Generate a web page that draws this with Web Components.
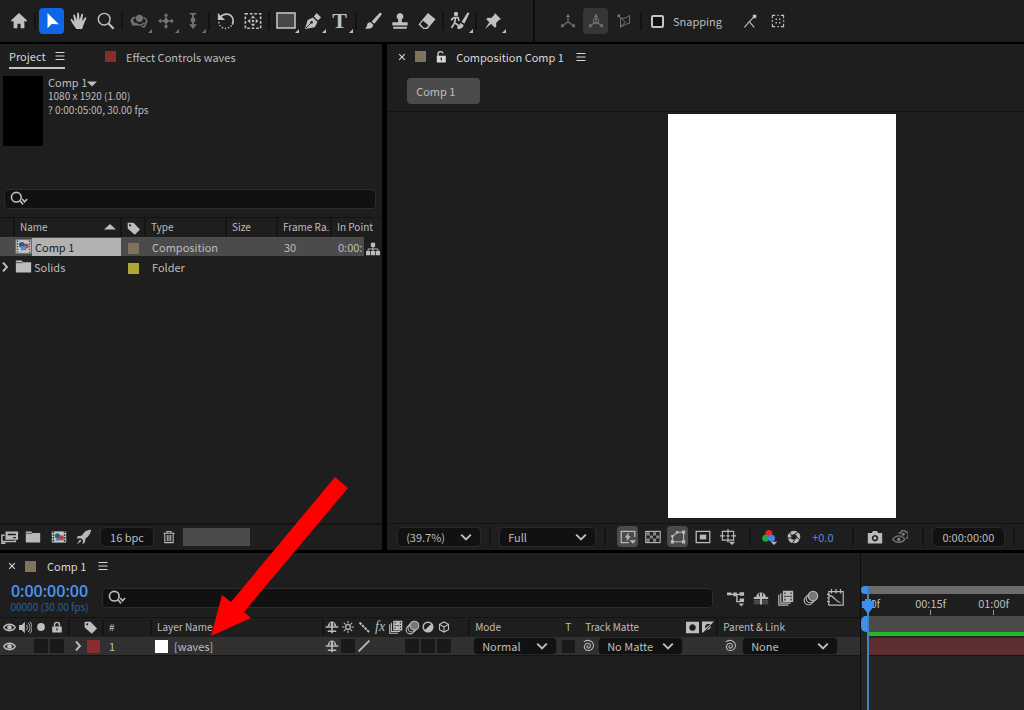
<!DOCTYPE html>
<html lang="en">
<head>
<meta charset="utf-8">
<meta name="viewport" content="width=device-width, initial-scale=1">
<title>Comp 1</title>
<style>
  html, body {
    margin: 0;
    height: 100%;
    background: #000;
  }
  body {
    font: 11px/14px "Noto Sans CJK SC", "Open Sans", sans-serif;
    color: #bdbdbd;
    overflow: hidden;
  }
</style>
</head>
<body>
<ae-app></ae-app>

<script>
const ICONS = {
  home: '<path d="M10 1 1 9.5l1.2 1.3L4 9.6V18h4.2v-5h3.6v5H16V9.6l1.8 1.2L19 9.5z" fill="currentColor"/>',
  select: '<path d="M5 1v17l4.6-4.6 8 .2z" fill="currentColor"/>',
  hand: '<path d="M7 19 2.2 12 .8 8.800c-.3-1.2 1-1.6 1.8-.6L5 11 3.6 4.200c-.2-1.5 1.6-1.8 2-.4L7.500 9 7.900 1.600c.1-1.5 2-1.5 2.100 0L10.600 9l2-6.300c.4-1.400 2.200-1 1.900.5L13.400 10l3-3.600c1-1.100 2.200-.2 1.600 1L15.500 13 13.500 19z" fill="currentColor"/>',
  zoom: '<circle cx="8" cy="8" r="6.5" fill="none" stroke="currentColor" stroke-width="1.6"/><path d="m13 13 5.5 5.5" stroke="currentColor" stroke-width="2.4"/>',
  orbit: '<g fill="none" stroke="currentColor" stroke-width="1.8"><path d="M6 6C1 7 0 11 4 13M9 14l-6-2M3 9v5h5M15 6c4 2 5 6 1 7M13 16c2 1 5 0 4-4M7 13c4 2 7 2 8-1"/></g><circle cx="10.5" cy="7" r="4" fill="currentColor"/>',
  pan: '<path d="M10 2v16M2 10h16" stroke="currentColor" stroke-width="1.8"/><path d="m10 0 3 4H7zM10 20l3-4H7zM0 10l4-3v6zM20 10l-4-3v6z" fill="currentColor"/><circle cx="10" cy="10" r="3" fill="currentColor"/>',
  dolly: '<path d="M10 1v15" stroke="currentColor" stroke-width="2.4"/><circle cx="10" cy="9" r="3" fill="currentColor"/><path d="m10 20 5-6H5zM6 0h8v2H6z" fill="currentColor"/>',
  rotate: '<path d="M3.5 6C7 1 15 1 17.5 7c1 3 .5 5-.5 7" fill="none" stroke="currentColor" stroke-width="1.8"/><path d="M2 11c1 8 10 10 15 3" fill="none" stroke="currentColor" stroke-width="1.6" stroke-dasharray="1.5 2"/><path d="M1 1v8h8z" fill="currentColor"/>',
  anchor: '<rect x="1.5" y="2" width="17" height="16" fill="none" stroke="currentColor" stroke-width="1.8" stroke-dasharray="3 2"/><path d="m10 4 2.5 3h-5zM10 16l2.5-3h-5zM4 10l3-2.5v5zM16 10l-3-2.5v5z" fill="currentColor"/><circle cx="10" cy="10" r="1.3" fill="currentColor"/>',
  rect: '<rect x="1" y="2" width="18" height="15" fill="#484848" stroke="currentColor" stroke-width="1.6"/>',
  pen: '<path d="M1 19 4 9l6-3 5 5-3 6zM11 5l3-4 5 5-3.5 3.5z" fill="currentColor"/><path d="m2 18 6-6" stroke="#1e1e1e"/><circle cx="8.5" cy="11.5" r="1.4" fill="#1e1e1e"/>',
  brush: '<path d="M19 1c1 .8.6 1.8 0 2.6L11.5 13 8.5 10.5 16.5 2c.8-.9 1.7-1.6 2.500-1zM7.600 11.600l2.700 2.500C10 18 6 19.500 1 18c2-.5 2-2 2.500-4s2.600-3 4.100-2.400z" fill="currentColor"/>',
  stamp: '<path d="M10 1a3.8 3.8 0 0 1 2 7v3.5h6.5V15h-17v-3.5H8V8a3.8 3.8 0 0 1 2-7zM2.5 16.5h15v2h-15z" fill="currentColor"/>',
  eraser: '<path d="m11 1 8.5 7L10.5 19H6L.5 14z" fill="currentColor"/><path d="m2.6 13.2 3-3.6 6 5-2.5 2.8H6.5z" fill="#1e1e1e"/>',
  roto: '<circle cx="6" cy="3" r="2.2" fill="currentColor"/><path d="M1 9l3-2.5h4L9 10M5.5 7l-1 5-3 5M5 12l3 2 .5 4" fill="none" stroke="currentColor" stroke-width="1.7"/><path d="m19.5 2-5 10.5-3-1.5 6-9.5zM10.5 12l3 2c0 3-3 4-6 4 2-2 1-4 3-6z" fill="currentColor"/>',
  pin: '<path d="m12 1 7 7-2 .6-3.5 3.5.2 4-1.500 1.500-4.300-4.300L1 19l5-7.500L2.500 8 4 6.500l4 .2L11.500 3z" fill="currentColor"/>',
  axis: '<path d="M10 3v8L3 16M10 11l7 5" fill="none" stroke="currentColor" stroke-width="1.4"/><path d="M7.5 5 10 1l2.5 4zM1 18l1-5 3.5 4zM19 18l-1-5-3.5 4z" fill="currentColor"/>',
  axisWorld: '<path d="M10 3v8L3 16M10 11l7 5" fill="none" stroke="currentColor" stroke-width="1.4"/><circle cx="10" cy="10" r="3.5" fill="none" stroke="currentColor" stroke-width="1.2"/><path d="M7.5 5 10 1l2.5 4zM1 18l1-5 3.5 4zM19 18l-1-5-3.5 4z" fill="currentColor"/>',
  axisView: '<path d="M5 6h7l6-4v11l-6 2-7 4zM2 2l10 10M5 18l7-6" fill="none" stroke="currentColor" stroke-width="1.4"/><circle cx="2.5" cy="2.5" r="2.2" fill="currentColor"/>',
  snapEdge: '<path d="m2 19 7-8 7 8M9 11l8-8" fill="none" stroke="currentColor" stroke-width="1.6"/><rect x="14" y="1" width="5" height="5" fill="currentColor"/>',
  snapBox: '<path d="M2 6V2h4M14 2h4v4M18 14v4h-4M6 18H2v-4" fill="none" stroke="currentColor" stroke-width="1.6"/><path d="M6.500 6.500h2v2h-2zM11.500 6.500h2v2h-2zM6.500 11.500h2v2h-2zM11.500 11.500h2v2h-2zM9 1h2v2H9zM9 17h2v2H9zM1 9h2v2H1zM17 9h2v2h-2z" fill="currentColor"/>',
  menu: '<path d="M1 3h18M1 10h18M1 17h18" stroke="currentColor" stroke-width="2"/>',
  close: '<path d="m3 3 14 14M17 3 3 17" stroke="currentColor" stroke-width="2.8"/>',
  unlock: '<path d="M5 9V5c0-5 8-5 8-1" fill="none" stroke="currentColor" stroke-width="2"/><path d="M3 8h15v11H3zm6.5 3v5h2v-5z" fill="currentColor" fill-rule="evenodd"/>',
  lock: '<path d="M6 9V6c0-5 8-5 8 0v3" fill="none" stroke="currentColor" stroke-width="2.4"/><path d="M2 9h16v10H2zm7 3v4h2v-4z" fill="currentColor" fill-rule="evenodd"/>',
  search: '<circle cx="7" cy="8" r="5.4" fill="none" stroke="currentColor" stroke-width="1.8"/><path d="m11 12 3.5 4M13.5 10l2.7 3 2.8-3" fill="none" stroke="currentColor" stroke-width="1.8"/>',
  tag: '<path d="M1 1h9L20 11.5 12 19.5 1 10zM4.8 3.5a1.600 1.600 0 1 0 .1 0z" fill="currentColor" fill-rule="evenodd"/>',
  sort: '<path d="M0 14 10 5l10 9z" fill="currentColor"/>',
  caret: '<path d="M0 5h20L10 15z" fill="currentColor"/>',
  chevronDown: '<path d="m2 6 8 8 8-8" fill="none" stroke="currentColor" stroke-width="3.4"/>',
  chevronRight: '<path d="m6 1 8 9-8 9" fill="none" stroke="currentColor" stroke-width="3.8"/>',
  compItem: '<rect x="1" y="2" width="18" height="16" fill="#c6c6c6" stroke="#777"/><path d="M3 3v14M17 3v14" stroke="#444" stroke-width="1.6" stroke-dasharray="1.6 1.6"/><circle cx="8" cy="8" r="3.4" fill="#23608c"/><circle cx="13" cy="9.5" r="3" fill="#b3404a"/><rect x="7" y="9.5" width="6" height="5" fill="#4697be"/>',
  film: '<rect x="1" y="3" width="18" height="14" fill="#c6c6c6"/><path d="M3 3v14M17 3v14" stroke="#222" stroke-width="2" stroke-dasharray="2 1.5"/><circle cx="8" cy="8.5" r="3.2" fill="#245f86"/><circle cx="13" cy="11" r="3.2" fill="#bd3f3f"/><circle cx="8.5" cy="13" r="2" fill="#3d82ac"/>',
  folder: '<path d="M1 3h7l1.5 2H19v12H1z" fill="currentColor"/><path d="M1 5.5h8" stroke="#1e1e1e" stroke-width=".8"/>',
  footage: '<path d="M5 4h14v9H5zM7.5 6.5v1.5h9V6.500zM13.500 10v1.300h3V10z" fill="currentColor" fill-rule="evenodd"/><path d="M4 8H1v7h15v-1.5M0 17h5" fill="none" stroke="currentColor" stroke-width="1.6"/>',
  rocket: '<path d="M19 1c-6 0-9 3-11.5 7L2 9l-1 3 5-.5L9 14l-1 5 3-2 1-5c4-3 6-6 7-11zM5 13l-4 6 6-4z" fill="currentColor"/>',
  trash: '<path d="M2 4.5h16M7 4V2h6v2M4 5v13h12V5M7.5 7v9M10 7v9M12.5 7v9" fill="none" stroke="currentColor" stroke-width="1.5"/>',
  flow: '<path d="M7 1h6v6H7zM0 13h6v6H0zM7 13h6v6H7zM14 13h6v6h-6z" fill="currentColor"/><path d="M10 6v8M3 14v-4h14v4" fill="none" stroke="currentColor" stroke-width="1.4"/>',
  preview: '<path d="M11 17H1.5V3h17v7" fill="none" stroke="currentColor" stroke-width="1.6"/><path d="m11 4-5 7h3l-1 5 5.5-7h-3zM12 14h8l-4 4.5z" fill="currentColor"/>',
  checker: '<rect x="1" y="3" width="18" height="14" fill="none" stroke="currentColor" stroke-width="1.4"/><path d="M2 4h4v4H2zM10 4h4v4h-4zM6 8h4v4H6zM14 8h4v4h-4zM2 12h4v4H2zM10 12h4v4h-4z" fill="#888"/>',
  mask: '<path d="M3 16V9l6-5h8v12z" fill="none" stroke="currentColor" stroke-width="1.4"/><path d="M1 14h4v4H1zM15 14h4v4h-4zM15 2h4v4h-4zM7.5 2.5h3v3h-3zM1.5 7.5h3v3h-3z" fill="currentColor"/>',
  region: '<rect x="1.5" y="3" width="17" height="14" fill="none" stroke="currentColor" stroke-width="1.6"/><path d="M6 7h8v6H6z" fill="currentColor"/>',
  guides: '<path d="M3 3h14v11H3zM10 0v6M10 11v6M0 8.5h6M14 8.5h6M8 8.5h4M10 6.5v4" fill="none" stroke="currentColor" stroke-width="1.5"/><path d="M11 16h8l-4 4z" fill="currentColor"/>',
  rgb: '<circle cx="8.5" cy="5.5" r="4.3" fill="#e0272c"/><circle cx="4.5" cy="11.5" r="4.3" fill="#23a83e"/><circle cx="12" cy="11.5" r="4.3" fill="#4484e8"/><path d="M11 16h8l-4 4z" fill="currentColor"/>',
  aperture: '<circle cx="10" cy="10" r="6.5" fill="none" stroke="currentColor" stroke-width="5"/><path d="M7 9 3 2M10 6.5 17 2M13.5 9.5l5 5M11 14l-4 6M7 12l-7-1" fill="none" stroke="#1e1e1e" stroke-width="1.4"/>',
  camera: '<path d="M1 5h5l1.5-2.5h5L14 5h5v13H1zm9 2.5a4 4 0 1 0 .1 0zm0 2a2 2 0 1 1-.1 0z" fill="currentColor" fill-rule="evenodd"/>',
  showSnap: '<path d="M1 13c4-6 11-6 15 0-4 5-11 5-15 0z" fill="none" stroke="currentColor" stroke-width="1.6"/><circle cx="8.5" cy="13" r="2.3" fill="currentColor"/><path d="M8 5h3l1-3h4l1 2h3v7h-3" fill="none" stroke="currentColor" stroke-width="1.6"/><circle cx="14" cy="6.5" r="2" fill="currentColor"/>',
  flowchart: '<path d="M1 6h7M10 6h5M11 6v8h4" fill="none" stroke="currentColor" stroke-width="1.6"/><path d="M0 4h5v3H0zM7 4h4v4H7zM14 3.5h5v4h-5zM14 10.5h5v4h-5zM13 16h6l-3 3.5z" fill="currentColor"/>',
  shy: '<path d="M4 9c0-9 12-9 12 0z" fill="currentColor"/><path d="M10 7v12M1 10h18M4 16h12" stroke="currentColor" stroke-width="2.2"/><path d="M7.5 4v5M12.5 4v5" stroke="#1e1e1e" stroke-width="1.5"/>',
  shyBig: '<path d="M1 12h18v6H1z" fill="#484848"/><path d="M4 9c0-8 12-8 12 0z" fill="currentColor"/><path d="M1 10h18M10 9v9" stroke="currentColor" stroke-width="2.4"/><path d="M8 4v4M12 4v4" stroke="#1e1e1e" stroke-width="1.2"/>',
  blend: '<path d="M1 6v13h12M3.5 4v12.5H16" fill="none" stroke="currentColor" stroke-width="1.5"/><path d="M6 1h13v14H6zM8 3v2h1.5V3zM8 7v2h1.5V7zM8 11v2h1.5v-2zM15.5 3v2H17V3zM15.5 7v2H17V7zM15.5 11v2H17v-2z" fill="currentColor" fill-rule="evenodd"/><path d="M10.5 8h4" stroke="#1e1e1e"/>',
  motion: '<circle cx="7" cy="13" r="5.5" fill="none" stroke="currentColor" stroke-width="1.4"/><circle cx="9.5" cy="10.5" r="5.5" fill="none" stroke="currentColor" stroke-width="1.4"/><circle cx="12.5" cy="7.5" r="5.9" fill="#777" stroke="currentColor" stroke-width="1.4"/>',
  graph: '<path d="M2 3h16v15H2zM2 7c7 0 7 8 13 8M5 0v5M10 0v5M15 0v5M0 6h3M0 10h3M0 14h3" fill="none" stroke="currentColor" stroke-width="1.3"/>',
  eye: '<path d="M1 10C5 3.5 15 3.5 19 10c-4 6.5-14 6.500-18 0z" fill="none" stroke="currentColor" stroke-width="2.2"/><circle cx="10" cy="10" r="3.6" fill="currentColor"/>',
  audio: '<path d="M0 6h4l5-5v18l-5-5H0z" fill="currentColor"/><path d="M11.5 6c2 2 2 6 0 8M14 3c4 4 4 10 0 14M17 1c4 5 4 13 0 18" fill="none" stroke="currentColor" stroke-width="1.5"/>',
  solo: '<circle cx="10" cy="10" r="6.5" fill="currentColor"/>',
  sun: '<circle cx="10" cy="10" r="4" fill="none" stroke="currentColor" stroke-width="2"/><path d="M10 0v4M10 16v4M0 10h4M16 10h4M3 3l3 3M14 14l3 3M17 3l-3 3M6 14l-3 3" stroke="currentColor" stroke-width="1.7"/>',
  quality: '<path d="m1 1 18 18" stroke="currentColor" stroke-width="3.6" stroke-dasharray="5 1.5"/>',
  adjust: '<circle cx="10" cy="10" r="8" fill="none" stroke="currentColor" stroke-width="2.4"/><path d="M16 4A8 8 0 1 1 4 16z" fill="currentColor"/>',
  cube: '<path d="m10 1.5 7.5 4v9l-7.5 4-7.5-4v-9zM2.5 6l7.5 4 7.5-4M10 10v8" fill="none" stroke="currentColor" stroke-width="1.8"/>',
  slash: '<path d="M1 19 19 1" stroke="currentColor" stroke-width="3"/>',
  matteA: '<path d="M0 1h20v18H0zm10 4a5 5 0 1 0 .1 0z" fill="currentColor" fill-rule="evenodd"/>',
  matteB: '<path d="M0 1h20L11 10 2 19H0zm10 4a5 5 0 0 0-4.5 7L14 5.5C12.5 5 11.5 5 10 5z" fill="currentColor" fill-rule="evenodd"/><path d="M15 8c0 4-3 7-7 7z" fill="currentColor"/>',
  whip: '<path d="M10.5 10c-1-1-3 1-1.5 2.4 2 1.6 5-.4 4.500-3.400C13 5.500 8 5 6 8c-3 4 0 9 5 8.500 5-.5 8-5 6.500-9.500C15.500 1.500 8 .5 4 4" fill="none" stroke="currentColor" stroke-width="1.5"/>'
};

const RESET = `
  * { box-sizing: border-box; }
  button, input, select { font: inherit; color: inherit; margin: 0; }
  button { border: 0; padding: 0; background: none; display: flex; align-items: center; justify-content: center; }
`;

class AeElement extends HTMLElement {
  constructor() {
    super();
    this.attachShadow({ mode: "open" });
  }

  connectedCallback() {
    this.shadowRoot.innerHTML = `<style>${RESET}</style>` + this.render();
  }

  get(name, fallback = "") {
    return this.getAttribute(name) ?? fallback;
  }
}

class AeIcon extends AeElement {
  render() {
    const size = this.get("size", "18");
    return `
      <style>
        :host { display: inline-flex; flex: none; vertical-align: middle; }
        svg { width: ${size}px; height: ${size}px; display: block; }
      </style>
      <svg viewBox="0 0 20 20" aria-hidden="true">${ICONS[this.get("name")]}</svg>
    `;
  }
}

class AeSeparator extends AeElement {
  render() {
    return `
      <style>
        :host { display: block; flex: none; width: 2px; height: 18px; margin: 0 2px; background: #131313; }
      </style>
    `;
  }
}

class ColorSwatch extends AeElement {
  render() {
    const size = this.get("size", "11");
    return `
      <style>
        :host { display: inline-block; flex: none; width: ${size}px; height: ${size}px; vertical-align: middle; background: ${this.get("color")}; }
      </style>
    `;
  }
}

class ToolButton extends AeElement {
  render() {
    const icon = this.get("icon");
    return `
      <style>
        :host { display: block; flex: none; }
        button { position: relative; width: 27px; height: 26px; border-radius: 4px; color: #c0c0c0; }
        :host([selected]) button { width: 25px; margin: 0 1px; background: #0d66e8; color: #fff; }
        :host([active]) button { width: 25px; margin: 0 1px; background: #363636; }
        :host([dim]) button { color: #737373; }
        .corner { position: absolute; right: 0; bottom: 1px; border: 2px solid transparent; border-right-color: currentColor; border-bottom-color: currentColor; }
        .letter { font: bold 22px/24px "Liberation Serif", serif; }
      </style>
      <button type="button" aria-label="${this.get("label")}">
        ${icon === "type" ? '<span class="letter">T</span>' : `<ae-icon name="${icon}" size="${this.get("size", "18")}"></ae-icon>`}
        ${this.hasAttribute("more") ? '<span class="corner"></span>' : ""}
      </button>
    `;
  }
}

class IconButton extends AeElement {
  render() {
    return `
      <style>
        :host { display: block; flex: none; }
        button { width: ${this.get("width", "25")}px; height: 21px; border-radius: 4px; color: #b9b9b9; }
        :host([active]) button { width: 21px; margin: 0 2px; background: #4b4b4b; }
        :host([dim]) button { color: #777; }
      </style>
      <button type="button" aria-label="${this.get("label")}"><ae-icon name="${this.get("icon")}" size="${this.get("size", "16")}"></ae-icon></button>
    `;
  }
}

class DropDown extends AeElement {
  render() {
    return `
      <style>
        :host { display: block; position: relative; flex: none; width: ${this.get("width")}px; height: ${this.get("height", "16")}px; }
        select { appearance: none; width: 100%; height: 100%; padding: 0 20px 0 8px; border: 0; border-radius: 3px; background: #111; line-height: 16px; outline: 1px solid #292929; }
        ae-icon { position: absolute; right: 8px; top: 0; bottom: 0; align-items: center; pointer-events: none; }
      </style>
      <select aria-label="${this.get("label")}"><option>${this.get("value")}</option></select>
      <ae-icon name="chevronDown" size="12"></ae-icon>
    `;
  }
}

class SearchBox extends AeElement {
  render() {
    return `
      <style>
        :host { display: flex; align-items: center; height: 20px; padding: 0 5px; background: #111; border: 1px solid #2c2c2c; border-radius: 4px; }
        input { flex: 1; min-width: 0; height: 16px; padding: 0 4px; border: 0; outline: 0; background: none; }
      </style>
      <ae-icon name="search" size="18"></ae-icon>
      <input type="text" aria-label="${this.get("label")}">
    `;
  }
}

class AppToolbar extends AeElement {
  render() {
    return `
      <style>
        :host { display: flex; height: 42px; background: #1e1e1e; }
        .group { display: flex; align-items: center; }
        .tools { flex: none; width: 535px; padding-left: 5px; border-right: 2px solid #0c0c0c; }
        .options { flex: 1; min-width: 0; padding-left: 19px; }
        .options tool-button { margin-right: 1px; }
        label { display: flex; align-items: center; gap: 9px; margin: 0 14px 0 7px; line-height: 16px; }
        input { appearance: none; width: 13px; height: 13px; border: 2px solid #c4c4c4; border-radius: 2px; background: #111; }
      </style>
      <div class="group tools">
        <tool-button icon="home" label="Home"></tool-button>
        <ae-separator></ae-separator>
        <tool-button icon="select" label="Selection" selected></tool-button>
        <tool-button icon="hand" label="Hand"></tool-button>
        <tool-button icon="zoom" label="Zoom"></tool-button>
        <ae-separator></ae-separator>
        <tool-button icon="orbit" label="Orbit" dim more></tool-button>
        <tool-button icon="pan" label="Pan" size="16" dim more></tool-button>
        <tool-button icon="dolly" label="Dolly" size="16" dim more></tool-button>
        <ae-separator></ae-separator>
        <tool-button icon="rotate" label="Rotate"></tool-button>
        <tool-button icon="anchor" label="Anchor point"></tool-button>
        <ae-separator></ae-separator>
        <tool-button icon="rect" label="Rectangle" size="20" more></tool-button>
        <tool-button icon="pen" label="Pen" more></tool-button>
        <tool-button icon="type" label="Type" more></tool-button>
        <ae-separator></ae-separator>
        <tool-button icon="brush" label="Brush"></tool-button>
        <tool-button icon="stamp" label="Clone stamp"></tool-button>
        <tool-button icon="eraser" label="Eraser"></tool-button>
        <ae-separator></ae-separator>
        <tool-button icon="roto" label="Roto brush" size="20" more></tool-button>
        <ae-separator></ae-separator>
        <tool-button icon="pin" label="Puppet pin" more></tool-button>
      </div>
      <div class="group options">
        <tool-button icon="axis" label="Local axis" size="16" dim></tool-button>
        <tool-button icon="axisWorld" label="World axis" size="16" dim active></tool-button>
        <tool-button icon="axisView" label="View axis" size="14" dim></tool-button>
        <ae-separator></ae-separator>
        <label><input type="checkbox">Snapping</label>
        <tool-button icon="snapEdge" label="Snap to edges" size="14"></tool-button>
        <tool-button icon="snapBox" label="Snap to features" size="14"></tool-button>
      </div>
    `;
  }
}

class ProjectPanel extends AeElement {
  render() {
    return `
      <style>
        :host { display: flex; flex-direction: column; min-width: 0; background: #1e1e1e; }
        .tabs { display: flex; align-items: center; height: 27px; padding: 0 0 2px 9px; }
        .tab { display: flex; align-items: center; justify-content: space-between; width: 56px; height: 25px; margin-right: 40px; border-bottom: 2px solid #c4c4c4; color: #d8d8d8; }
        .tabs color-swatch { margin-right: 10px; }
        .info { display: flex; gap: 5px; height: 88px; padding: 5px 3px; }
        .thumb { width: 40px; height: 70px; background: #000; }
        .info p { margin: 0; font-size: 10px; line-height: 14px; }
        .info .name { font-size: 11px; line-height: 12px; }
        .name ae-icon { height: 10px; }
        search-box { margin: 30px 6px 8px 4px; }
        .list { flex: 1; border-top: 1px solid #131313; }
        table { width: 100%; table-layout: fixed; border-collapse: collapse; line-height: 18px; }
        th { height: 18px; padding: 0 0 0 5px; overflow: hidden; white-space: nowrap; font-size: 10px; font-weight: normal; text-align: left; border-left: 2px solid #141414; }
        th:first-child { padding: 0; border-left: 0; }
        td { height: 20px; padding: 0; overflow: hidden; white-space: nowrap; }
        .head { display: flex; align-items: center; justify-content: space-between; margin-left: 13px; padding: 0 4px 0 5px; border-left: 2px solid #141414; }
        .mark { padding-left: 7px; }
        .num { padding-left: 7px; }
        .item { display: flex; align-items: center; height: 18px; }
        .file { padding-left: 15px; }
        .file span { flex: 1; padding-left: 3px; background: #b2b2b2; color: #222; }
        .dir { gap: 2px; }
        .dir ae-icon[name="folder"] { margin-left: 3px; }
        .picked td { background: #4b4b4b; border: solid #1e1e1e; border-width: 1px 0; }
        .picked td:last-child { padding-left: 2px; background: none; }
        footer { display: flex; align-items: center; height: 27px; border-top: 2px solid #131313; }
        .depth { width: 52px; height: 18px; margin: 0 6px 0 5px; border-radius: 4px; background: #111; outline: 1px solid #292929; }
        .bar { width: 67px; height: 18px; margin-left: 4px; background: #4b4b4b; }
      </style>
      <div class="tabs">
        <div class="tab">Project <ae-icon name="menu" size="10"></ae-icon></div>
        <color-swatch color="#8a2b2e"></color-swatch>
        <span>Effect Controls waves</span>
      </div>
      <div class="info">
        <div class="thumb"></div>
        <div>
          <p class="name">Comp 1<ae-icon name="caret" size="10"></ae-icon></p>
          <p>1080 x 1920 (1.00)</p>
          <p>? 0:00:05:00, 30.00 fps</p>
        </div>
      </div>
      <search-box label="Search project"></search-box>
      <div class="list">
        <table>
          <colgroup><col style="width: 121px"><col style="width: 24px"><col style="width: 81px"><col style="width: 51px"><col style="width: 54px"><col style="width: 33px"><col></colgroup>
          <thead>
            <tr>
              <th><span class="head">Name <ae-icon name="sort" size="12"></ae-icon></span></th>
              <th><ae-icon name="tag" size="13"></ae-icon></th>
              <th>Type</th>
              <th>Size</th>
              <th>Frame Ra..</th>
              <th colspan="2">In Point</th>
            </tr>
          </thead>
          <tbody>
            <tr class="picked">
              <td><div class="item file"><ae-icon name="compItem" size="17"></ae-icon><span>Comp 1</span></div></td>
              <td class="mark"><color-swatch color="#7f745b"></color-swatch></td>
              <td class="num">Composition</td>
              <td></td>
              <td class="num">30</td>
              <td class="num">0:00:</td>
              <td><ae-icon name="flow" size="14"></ae-icon></td>
            </tr>
            <tr>
              <td><div class="item dir"><ae-icon name="chevronRight" size="10"></ae-icon><ae-icon name="folder" size="17"></ae-icon><span>Solids</span></div></td>
              <td class="mark"><color-swatch color="#b0a632"></color-swatch></td>
              <td class="num">Folder</td>
              <td></td><td></td><td></td><td></td>
            </tr>
          </tbody>
        </table>
      </div>
      <footer>
        <icon-button icon="footage" label="Interpret footage" size="18" width="20"></icon-button>
        <icon-button icon="folder" label="New folder" width="26"></icon-button>
        <icon-button icon="film" label="New composition"></icon-button>
        <icon-button icon="rocket" label="Project settings"></icon-button>
        <button class="depth" type="button">16 bpc</button>
        <icon-button icon="trash" label="Delete" size="14" width="20"></icon-button>
        <div class="bar"></div>
      </footer>
    `;
  }
}

class CompositionPanel extends AeElement {
  render() {
    return `
      <style>
        :host { display: flex; flex-direction: column; min-width: 0; min-height: 0; overflow: hidden; background: #1e1e1e; }
        .tabs { display: flex; align-items: center; gap: 9px; height: 27px; padding: 0 0 2px 11px; color: #d8d8d8; }
        .tabs ae-icon[name="menu"] { margin-left: 3px; }
        .crumbs { height: 41px; padding: 7px 20px; border-bottom: 1px solid #131313; }
        .crumbs button { width: 73px; height: 26px; padding-left: 9px; justify-content: flex-start; border-radius: 4px; background: #4b4b4b; }
        .stage { flex: 1; min-height: 0; display: flex; justify-content: center; padding: 2px 0 5px 24%; }
        .frame { height: 100%; aspect-ratio: 9 / 16; background: #fff; }
        footer { display: flex; align-items: center; height: 27px; padding-left: 11px; border-top: 1px solid #131313; }
        footer ae-separator { margin: 0 9px; }
        .exposure { width: 35px; padding-left: 4px; color: #4a8cea; }
        .time { width: 72px; height: 18px; border-radius: 4px; background: #111; outline: 1px solid #292929; }
      </style>
      <div class="tabs">
        <ae-icon name="close" size="8"></ae-icon>
        <color-swatch color="#7f735e"></color-swatch>
        <ae-icon name="unlock" size="12"></ae-icon>
        <span>Composition Comp 1</span>
        <ae-icon name="menu" size="10"></ae-icon>
      </div>
      <div class="crumbs"><button type="button">Comp 1</button></div>
      <div class="stage"><div class="frame"></div></div>
      <footer>
        <drop-down label="Magnification" value="(39.7%)" width="82" height="18"></drop-down>
        <ae-separator></ae-separator>
        <drop-down label="Resolution" value="Full" width="95" height="18"></drop-down>
        <ae-separator></ae-separator>
        <icon-button icon="preview" label="Fast previews" active></icon-button>
        <icon-button icon="checker" label="Transparency grid"></icon-button>
        <icon-button icon="mask" label="Mask visibility" active></icon-button>
        <icon-button icon="region" label="Region of interest"></icon-button>
        <icon-button icon="guides" label="Guides"></icon-button>
        <ae-separator></ae-separator>
        <icon-button icon="rgb" label="Channels" width="20"></icon-button>
        <icon-button icon="aperture" label="Reset exposure" size="14" width="28"></icon-button>
        <span class="exposure">+0.0</span>
        <ae-separator></ae-separator>
        <icon-button icon="camera" label="Take snapshot"></icon-button>
        <icon-button icon="showSnap" label="Show snapshot" dim></icon-button>
        <ae-separator></ae-separator>
        <button class="time" type="button">0:00:00:00</button>
        <ae-separator></ae-separator>
      </footer>
    `;
  }
}

class LayerTable extends AeElement {
  render() {
    return `
      <style>
        :host { display: block; }
        table { width: 100%; table-layout: fixed; border-collapse: collapse; }
        th { height: 19px; padding: 0; font-size: 10px; font-weight: normal; text-align: left; white-space: nowrap; }
        td { height: 19px; padding: 0; background: #303030; border-bottom: 1px solid #141414; line-height: 16px; white-space: nowrap; }
        .cell { display: flex; align-items: center; height: 16px; padding-left: 5px; }
        .end { border-right: 2px solid #141414; }
        .slots { padding-left: 1px; }
        .slots > * { width: 16px; display: flex; justify-content: center; flex: none; }
        .slots > .box { width: 14px; height: 14px; margin: 0 1px; background: #191919; }
        .switches { padding-left: 0; }
        .fx { font: italic 14px/14px "Liberation Serif", serif; }
        .tag { padding-left: 14px; }
        .label { gap: 4px; padding-left: 3px; }
        .name { gap: 6px; padding-left: 3px; }
        .mode { margin-left: 4px; }
        .dot { width: 13px; height: 13px; margin-left: 2px; background: #191919; }
        .between { justify-content: space-between; }
        .matte { gap: 4px; padding-left: 1px; }
        .parent { gap: 6px; }
      </style>
      <table>
        <colgroup><col style="width: 70px"><col style="width: 34px"><col style="width: 48px"><col><col style="width: 146px"><col style="width: 90px"><col style="width: 20px"><col style="width: 138px"><col style="width: 142px"></colgroup>
        <thead>
          <tr>
            <th><div class="cell slots end"><ae-icon name="eye" size="13"></ae-icon><ae-icon name="audio" size="13"></ae-icon><ae-icon name="solo" size="12"></ae-icon><ae-icon name="lock" size="12"></ae-icon></div></th>
            <th><div class="cell tag end"><ae-icon name="tag" size="13"></ae-icon></div></th>
            <th><div class="cell end">#</div></th>
            <th><div class="cell end">Layer Name</div></th>
            <th><div class="cell slots switches end">
              <ae-icon name="shy" size="14"></ae-icon><ae-icon name="sun" size="12"></ae-icon><ae-icon name="quality" size="11"></ae-icon><span class="fx">fx</span>
              <ae-icon name="blend" size="14"></ae-icon><ae-icon name="motion" size="15"></ae-icon><ae-icon name="adjust" size="12"></ae-icon><ae-icon name="cube" size="12"></ae-icon>
            </div></th>
            <th><div class="cell">Mode</div></th>
            <th><div class="cell">T</div></th>
            <th><div class="cell between end">Track Matte<span class="cell slots"><ae-icon name="matteA" size="13"></ae-icon><ae-icon name="matteB" size="12"></ae-icon></span></div></th>
            <th><div class="cell">Parent &amp; Link</div></th>
          </tr>
        </thead>
        <tbody>
          <tr>
            <td><div class="cell slots"><ae-icon name="eye" size="13"></ae-icon><span></span><span class="box"></span><span class="box"></span></div></td>
            <td><div class="cell label"><ae-icon name="chevronRight" size="10"></ae-icon><color-swatch color="#8a2b2e" size="13"></color-swatch></div></td>
            <td><div class="cell">1</div></td>
            <td><div class="cell name"><color-swatch color="#fff" size="13"></color-swatch>[waves]</div></td>
            <td><div class="cell slots switches">
              <ae-icon name="shy" size="14"></ae-icon><span class="box"></span><ae-icon name="slash" size="12"></ae-icon><span></span>
              <span></span><span class="box"></span><span class="box"></span><span class="box"></span>
            </div></td>
            <td><drop-down class="mode" label="Mode" value="Normal" width="82"></drop-down></td>
            <td><div class="dot"></div></td>
            <td><div class="cell matte"><ae-icon name="whip" size="14"></ae-icon><drop-down label="Track matte" value="No Matte" width="83"></drop-down></div></td>
            <td><div class="cell parent"><ae-icon name="whip" size="14"></ae-icon><drop-down label="Parent" value="None" width="94"></drop-down></div></td>
          </tr>
        </tbody>
      </table>
    `;
  }
}

class TimeRuler extends AeElement {
  render() {
    const marks = ["0:00f", "00:15f", "01:00f"];
    return `
      <style>
        :host { display: flex; flex-direction: column; position: relative; min-width: 0; overflow: hidden; background: #252525; border-left: 1px solid #0c0c0c; }
        .top { height: 33px; background: #1e1e1e; }
        .strip { height: 8px; margin-left: 7px; background: #6c6c6c; }
        .labels { display: flex; height: 22px; padding-top: 2px; margin-left: -25px; background: #1e1e1e; }
        .labels span { position: relative; flex: none; width: 63px; height: 20px; text-align: center; line-height: 14px; }
        .labels span::after { content: ""; position: absolute; left: 31px; bottom: 1px; width: 1px; height: 5px; background: #999; }
        .work { height: 16px; margin-left: 7px; background: #4a4a4a; }
        .cache { height: 4px; margin-left: 7px; background: #1fb82c; }
        .layer { height: 18px; margin: 2px 0 0 7px; background: #5e2f30; border-bottom: 1px solid #141414; }
        .handle { position: absolute; left: 0; width: 7px; background: #3f8fec; border-radius: 5px 0 0 5px; }
        .start { top: 33px; height: 8px; }
        .area { top: 63px; height: 16px; }
        .playhead { position: absolute; left: 6px; top: 33px; bottom: 0; width: 2px; background: #4484bc; }
        svg { position: absolute; left: 0; top: 46px; width: 14px; height: 15px; }
      </style>
      <div class="top"></div>
      <div class="strip"></div>
      <div class="labels">${marks.map((m) => `<span>${m}</span>`).join("")}</div>
      <div class="work"></div>
      <div class="cache"></div>
      <div class="layer"></div>
      <div class="handle start"></div>
      <div class="handle area"></div>
      <div class="playhead"></div>
      <svg viewBox="0 0 14 15" aria-hidden="true"><path d="M1 2h3V0h2v2h2V0h2v2h3v5l-6 8-6-8z" fill="#3f8fec"/></svg>
    `;
  }
}

class TimelinePanel extends AeElement {
  render() {
    return `
      <style>
        :host { display: grid; grid-template-columns: minmax(0, 84fr) minmax(0, 16fr); min-height: 0; background: #1e1e1e; }
        .tabs { display: flex; align-items: center; height: 27px; padding-left: 8px; color: #d8d8d8; }
        .tabs color-swatch { margin: 0 11px 0 9px; }
        .tabs span { margin-right: 12px; }
        .controls { display: flex; align-items: center; height: 37px; padding: 0 12px 0 8px; }
        .time { width: 83px; margin-right: 11px; text-align: center; white-space: nowrap; color: #2a5f9e; font-size: 10px; line-height: 14px; }
        .time b { display: block; color: #4a94f0; font: 600 16px/18px "Open Sans", sans-serif; }
        search-box { flex: 1; margin-right: 10px; }
        layer-table { border-top: 1px solid #131313; }
      </style>
      <div>
        <div class="tabs"><ae-icon name="close" size="8"></ae-icon><color-swatch color="#7f735e"></color-swatch><span>Comp 1</span><ae-icon name="menu" size="10"></ae-icon></div>
        <div class="controls">
          <div class="time"><b>0:00:00:00</b>00000 (30.00 fps)</div>
          <search-box label="Search layers"></search-box>
          <icon-button icon="flowchart" label="Mini-flowchart" size="18"></icon-button>
          <icon-button icon="shyBig" label="Hide shy layers"></icon-button>
          <icon-button icon="blend" label="Frame blending"></icon-button>
          <icon-button icon="motion" label="Motion blur"></icon-button>
          <icon-button icon="graph" label="Graph editor" size="18"></icon-button>
        </div>
        <layer-table></layer-table>
      </div>
      <time-ruler></time-ruler>
    `;
  }
}

class PointerArrow extends AeElement {
  render() {
    return `
      <style>
        :host { position: absolute; left: 210px; top: 476px; pointer-events: none; }
        svg { display: block; width: 140px; height: 162px; }
      </style>
      <svg viewBox="0 0 140 162" aria-hidden="true"><path d="M1 160 12 119l9 7L125 1l13 11L34 136l7 6z" fill="#fe0000"/></svg>
    `;
  }
}

class AeApp extends AeElement {
  render() {
    return `
      <style>
        :host { display: grid; grid-template-rows: auto minmax(0, 13fr) minmax(0, 4fr); position: relative; height: 100vh; }
        .panels { display: grid; grid-template-columns: minmax(0, 3fr) minmax(0, 5fr); gap: 5px; padding: 2px 0 3px; min-height: 0; }
      </style>
      <app-toolbar></app-toolbar>
      <div class="panels">
        <project-panel></project-panel>
        <composition-panel></composition-panel>
      </div>
      <timeline-panel></timeline-panel>
      <pointer-arrow></pointer-arrow>
    `;
  }
}

customElements.define("ae-icon", AeIcon);
customElements.define("ae-separator", AeSeparator);
customElements.define("color-swatch", ColorSwatch);
customElements.define("tool-button", ToolButton);
customElements.define("icon-button", IconButton);
customElements.define("drop-down", DropDown);
customElements.define("search-box", SearchBox);
customElements.define("app-toolbar", AppToolbar);
customElements.define("project-panel", ProjectPanel);
customElements.define("composition-panel", CompositionPanel);
customElements.define("layer-table", LayerTable);
customElements.define("time-ruler", TimeRuler);
customElements.define("timeline-panel", TimelinePanel);
customElements.define("pointer-arrow", PointerArrow);
customElements.define("ae-app", AeApp);
</script>
</body>
</html>
